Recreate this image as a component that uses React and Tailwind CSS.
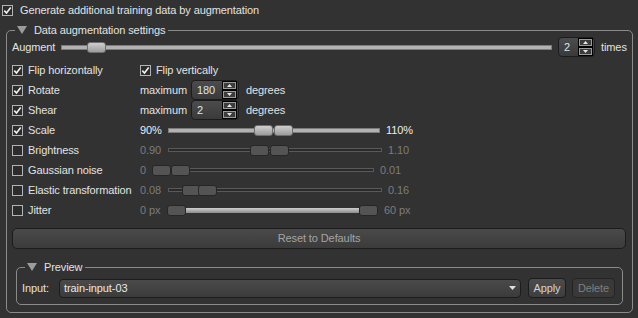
import React from 'react';

const FONT = { fontFamily: '"Liberation Sans", Arial, sans-serif' };

const Check = ({ checked }) => (
    <svg width="11" height="11" viewBox="0 0 11 11" className="shrink-0">
        <rect x="0.5" y="0.5" width="10" height="10" fill="#2c2c2c" stroke="#b4b4b4" />
        {checked && <path d="M2.3 5.6 L4.5 8 L8.7 2.6" fill="none" stroke="#f2f2f2" strokeWidth="1.6" />}
    </svg>
);

const Tri = () => (
    <svg width="10" height="8" viewBox="0 0 10 8" className="shrink-0">
        <path d="M0 0 H10 L5 8 Z" fill="#9c9c9c" />
    </svg>
);

const SpinBtn = ({ up }) => (
    <div className="w-[15px] h-[9px] border border-black bg-[#3c3c3c] shadow-[inset_0_0_0_1px_#9a9a9a] flex items-center justify-center">
        <svg width="5" height="3" viewBox="0 0 5 3">
            <path d={up ? 'M0 3 H5 L2.5 0 Z' : 'M0 0 H5 L2.5 3 Z'} fill="#e8e8e8" />
        </svg>
    </div>
);

const Spin = ({ value, w }) => (
    <div className={`${w} h-[20px] rounded-[4px] border border-[#1c1c1c] bg-gradient-to-b from-[#4c4c4c] to-[#3a3a3a] flex items-center justify-between pl-[5px] pr-[1px]`}>
        <span className="text-[#dde4ee]">{value}</span>
        <div className="flex flex-col">
            <SpinBtn up />
            <SpinBtn />
        </div>
    </div>
);

const Handle = ({ x, enabled }) => (
    <div
        className={`absolute top-[-1px] w-[19px] h-[11px] rounded-[3px] border ${enabled ? 'border-[#6e6e6e] bg-gradient-to-b from-[#cfcfcf] to-[#9c9c9c]' : 'border-[#262626] bg-[#545454]'}`}
        style={{ left: x }}
    />
);

// groove starts at x0 (page coords), handles given in page coords
const Slider = ({ x0, x1, handles, enabled, range }) => (
    <div className="relative h-[9px] flex items-center" style={{ width: x1 - x0 }}>
        <div className={`w-full border ${enabled ? 'h-[5px] bg-[#b2b2b2] border-[#7c7c7c]' : 'h-[4px] bg-[#2a2a2a] border-[#595959]'}`} />
        {range && (
            <div
                className="absolute top-[2px] h-[5px] bg-gradient-to-b from-[#d0d0d0] to-[#8c8c8c]"
                style={{ left: range[0] - x0, width: range[1] - range[0] }}
            />
        )}
        {handles.map(h => <Handle key={h} x={h - x0} enabled={enabled} />)}
    </div>
);

const Legend = ({ title }) => (
    <div className="absolute left-[8px] top-[-9px] h-[16px] flex items-center gap-[7px] pl-[2px] pr-[3px] bg-[#323232] text-[#e2e2e2]">
        <Tri />
        <span>{title}</span>
    </div>
);

const RangeRow = ({ lo, hi, loW, x1, handles, range, enabled }) => (
    <div className="flex items-center">
        <span className={`${enabled ? 'text-[#eaeef4]' : 'text-[#7c7c7c]'}`} style={{ width: loW }}>{lo}</span>
        <Slider x0={140 + loW} x1={x1} handles={handles} enabled={enabled} range={range} />
        <span className={`ml-[6px] ${enabled ? 'text-[#eaeef4]' : 'text-[#7c7c7c]'}`}>{hi}</span>
    </div>
);

const Row = ({ label, checked, children }) => (
    <div className="flex h-[20px] items-center">
        <div className="w-[128px] flex items-center gap-[5px]">
            <Check checked={checked} />
            <span className="whitespace-nowrap">{label}</span>
        </div>
        {children}
    </div>
);

const App = () => {
    return (
        <div className="w-[638px] h-[318px] bg-[#323232] text-[11px] tracking-[-0.1px] text-[#e2e2e2] overflow-hidden" style={FONT}>
            {/* top checkbox */}
            <div className="h-[20px] flex items-center gap-[7px] pl-[2px]">
                <Check checked />
                <span>Generate additional training data by augmentation</span>
            </div>

            {/* settings group */}
            <div className="relative ml-[6px] mt-[10px] w-[627px] h-[283px] border border-[#8a8a8a] rounded-[5px] pl-[5px] pt-[6px]">
                <Legend title="Data augmentation settings" />

                <div className="flex h-[20px] items-center">
                    <span className="w-[49px]">Augment</span>
                    <Slider x0={61} x1={552} handles={[87]} enabled />
                    <div className="ml-[6px]">
                        <Spin value="2" w="w-[37px]" />
                    </div>
                    <span className="ml-[6px]">times</span>
                </div>

                <div className="mt-[3px] flex flex-col">
                    <Row label="Flip horizontally" checked>
                        <div className="flex items-center gap-[5px]">
                            <Check checked />
                            <span>Flip vertically</span>
                        </div>
                    </Row>
                    <Row label="Rotate" checked>
                        <span className="w-[51px]">maximum</span>
                        <Spin value="180" w="w-[48px]" />
                        <span className="ml-[7px]">degrees</span>
                    </Row>
                    <Row label="Shear" checked>
                        <span className="w-[51px]">maximum</span>
                        <Spin value="2" w="w-[48px]" />
                        <span className="ml-[7px]">degrees</span>
                    </Row>
                    <Row label="Scale" checked>
                        <RangeRow lo="90%" hi="110%" loW={28} x1={380} handles={[254, 274]} enabled />
                    </Row>
                    <Row label="Brightness">
                        <RangeRow lo="0.90" hi="1.10" loW={28} x1={382} handles={[250, 270]} />
                    </Row>
                    <Row label="Gaussian noise">
                        <RangeRow lo="0" hi="0.01" loW={12} x1={374} handles={[152, 171]} />
                    </Row>
                    <Row label="Elastic transformation">
                        <RangeRow lo="0.08" hi="0.16" loW={28} x1={382} handles={[182, 198]} />
                    </Row>
                    <Row label="Jitter">
                        <RangeRow lo="0 px" hi="60 px" loW={28} x1={378} handles={[167, 359]} range={[185, 360]} />
                    </Row>
                </div>

                <button className="mt-[8px] w-[614px] h-[21px] rounded-[5px] border border-[#1c1c1c] bg-gradient-to-b from-[#4a4a4a] to-[#3b3b3b] text-[#a4a4a4] flex items-center justify-center">
                    Reset to Defaults
                </button>

                {/* preview group */}
                <div className="relative mt-[18px] ml-[4px] w-[607px] h-[38px] border border-[#8a8a8a] rounded-[5px] pl-[5px] pt-[10px]">
                    <Legend title="Preview" />
                    <div className="flex items-center">
                        <span className="w-[37px]">Input:</span>
                        <div className="w-[462px] h-[19px] rounded-[4px] border border-[#1c1c1c] bg-gradient-to-b from-[#4a4a4a] to-[#3b3b3b] flex items-center justify-between pl-[4px] pr-[4px]">
                            <span className="text-[#e8e8e8]">train-input-03</span>
                            <svg width="7" height="4" viewBox="0 0 7 4">
                                <path d="M0 0 H7 L3.5 4 Z" fill="#e0e0e0" />
                            </svg>
                        </div>
                        <button className="ml-[7px] w-[38px] h-[20px] rounded-[4px] border border-[#1c1c1c] bg-gradient-to-b from-[#4c4c4c] to-[#3e3e3e] text-[#d4d4d4]">
                            Apply
                        </button>
                        <button className="ml-[6px] w-[43px] h-[20px] rounded-[4px] border border-[#242424] bg-[#393939] text-[#7e7e7e]">
                            Delete
                        </button>
                    </div>
                </div>
            </div>
        </div>
    );
};

export default App;
